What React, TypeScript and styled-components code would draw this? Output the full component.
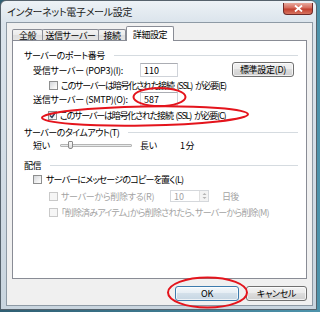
import styled, { createGlobalStyle } from 'styled-components';

const GlobalStyle = createGlobalStyle`
  html, body {
    margin: 0;
    padding: 0;
  }
  body {
    width: 320px;
    height: 312px;
    overflow: hidden;
    background: linear-gradient(90deg, #2f5f73 0%, #4d93ab 100%);
    font-family: "Noto Sans CJK JP", "Noto Sans", sans-serif;
    font-size: 9px;
    font-feature-settings: "palt" 1;
    letter-spacing: -0.7px;
    color: #000;
  }
`;

const CheckMark = () => (
  <svg width="7" height="7" viewBox="0 0 7 7">
    <path d="M1 3.5 L3 5.5 L6 1" fill="none" stroke="#2b3b58" strokeWidth="1.4" />
  </svg>
);

const Annotations = () => (
  <Overlay width="320" height="312" viewBox="0 0 320 312">
    <ellipse cx="159.5" cy="97" rx="26" ry="9" fill="none" stroke="#e4141c" strokeWidth="2" />
    <ellipse cx="145" cy="116" rx="103" ry="9.5" fill="none" stroke="#e4141c" strokeWidth="2" transform="rotate(-1 145 116)" />
    <ellipse cx="207.5" cy="292.5" rx="39.5" ry="15" fill="none" stroke="#e4141c" strokeWidth="2" />
  </Overlay>
);

const App = () => {
  return (
    <>
      <GlobalStyle />
      <Window>
        <TitleBar>
          <Title>インターネット電子メール設定</Title>
          <CloseButton>
            <svg width="9" height="7" viewBox="0 0 9 7">
              <path d="M1 0.5 L8 6.5 M8 0.5 L1 6.5" stroke="#fff" strokeWidth="1.8" />
            </svg>
          </CloseButton>
        </TitleBar>

        <Client>
          <TabBar>
            <Tab $w={31}>全般</Tab>
            <Tab $w={57}>送信サーバー</Tab>
            <Tab $w={28}>接続</Tab>
            <Tab $w={48} $active>詳細設定</Tab>
          </TabBar>

          <Panel>
            <GroupHeader $mt={7}>
              <span>サーバーのポート番号</span>
              <Rule />
            </GroupHeader>
            <Row $h={16} $indent={9}>
              <Label $w={107}>受信サーバー (POP3)(I):</Label>
              <TextBox $w={38}>110</TextBox>
              <PushButton $w={62}>標準設定(D)</PushButton>
            </Row>
            <Row $h={14} $indent={25}>
              <Check />
              <Caption $tight>このサーバーは暗号化された接続 (SSL) が必要(E)</Caption>
            </Row>
            <Row $h={14} $indent={9}>
              <Label $w={107}>送信サーバー (SMTP)(O):</Label>
              <TextBox $w={38}>587</TextBox>
            </Row>
            <Row $h={19} $indent={24}>
              <Check>
                <CheckMark />
              </Check>
              <Caption $tight>このサーバーは暗号化された接続 (SSL) が必要(C)</Caption>
            </Row>

            <GroupHeader>
              <span>サーバーのタイムアウト(T)</span>
              <Rule />
            </GroupHeader>
            <Row $h={12} $indent={9}>
              <Label $w={27}>短い</Label>
              <Slider>
                <Thumb />
              </Slider>
              <Label $w={40}>長い</Label>
              <span>1 分</span>
            </Row>

            <GroupHeader $mt={7}>
              <span>配信</span>
              <Rule />
            </GroupHeader>
            <Row $h={14} $indent={9}>
              <Check $gap={4} />
              <Caption>サーバーにメッセージのコピーを置く(L)</Caption>
            </Row>
            <Row $h={14} $mt={3} $indent={25} $disabled>
              <Check $disabled />
              <Label $w={109}>サーバーから削除する(R)</Label>
              <SpinBox>
                <SpinValue>10</SpinValue>
                <SpinArrows>
                  <svg width="7" height="10" viewBox="0 0 7 10">
                    <path d="M1.5 4 L3.5 2 L5.5 4 Z M1.5 6 L3.5 8 L5.5 6 Z" fill="#b4b4b4" />
                  </svg>
                </SpinArrows>
              </SpinBox>
              <Suffix>日後</Suffix>
            </Row>
            <Row $h={14} $mt={2} $indent={25} $disabled>
              <Check $disabled />
              <Caption>「削除済みアイテム」から削除されたら、サーバーから削除(M)</Caption>
            </Row>
          </Panel>

          <ButtonRow>
            <PushButton $w={64} $default>OK</PushButton>
            <PushButton $w={61}>キャンセル</PushButton>
          </ButtonRow>
        </Client>
        <Annotations />
      </Window>
    </>
  );
};

export default App;

const Window = styled.div`
  position: relative;
  width: 317px;
  height: 310px;
  box-sizing: border-box;
  border: 1px solid #56626c;
  border-radius: 6px 6px 0 0;
  background: linear-gradient(180deg, #edf2f6 0%, #dbe4ec 7%, #d3dde6 50%, #c9d5df 100%);
  display: flex;
  flex-direction: column;
`;

const TitleBar = styled.div`
  height: 21px;
  display: flex;
  align-items: flex-start;
  padding-left: 6px;
`;

const Title = styled.div`
  font-size: 10px;
  line-height: 21px;
  letter-spacing: -0.3px;
  color: #1a1a1a;
`;

const CloseButton = styled.div`
  margin: 2px 3px 0 auto;
  width: 30px;
  height: 12px;
  box-sizing: border-box;
  border: 1px solid #6e2a28;
  border-top: none;
  border-radius: 0 0 4px 4px;
  background: linear-gradient(180deg, #e8a89c 0%, #d56a5c 45%, #c2402f 55%, #d7735f 100%);
  display: flex;
  align-items: center;
  justify-content: center;
`;

const Client = styled.div`
  flex: 1;
  margin: 0 3px 3px 5px;
  box-sizing: border-box;
  border: 1px solid #8e9aa5;
  background: #f0f0f0;
  padding: 3px 5px 0;
  display: flex;
  flex-direction: column;
`;

const TabBar = styled.div`
  height: 14px;
  display: flex;
  align-items: flex-end;
  position: relative;
  z-index: 1;
`;

const Tab = styled.div<{ $w: number; $active?: boolean }>`
  width: ${(p) => p.$w}px;
  height: ${(p) => (p.$active ? 15 : 11)}px;
  margin-bottom: ${(p) => (p.$active ? -1 : 0)}px;
  box-sizing: border-box;
  border: 1px solid #898c95;
  border-bottom: none;
  margin-left: ${(p) => (p.$active ? 0 : -1)}px;
  border-radius: 2px 2px 0 0;
  background: ${(p) =>
    p.$active ? '#fff' : 'linear-gradient(180deg, #f3f3f3 0%, #ebebeb 50%, #dedede 51%, #e5e5e5 100%)'};
  display: flex;
  align-items: center;
  justify-content: center;
  line-height: 1;
  letter-spacing: -0.4px;
  white-space: nowrap;
  &:first-child {
    margin-left: 0;
  }
`;

const Panel = styled.div`
  height: 239px;
  box-sizing: border-box;
  border: 1px solid #898c95;
  background: #fff;
  padding: 0 8px 0 11px;
  display: flex;
  flex-direction: column;
`;

const GroupHeader = styled.div<{ $mt?: number }>`
  height: 14px;
  margin-top: ${(p) => p.$mt ?? 0}px;
  display: flex;
  align-items: center;
  white-space: nowrap;
  letter-spacing: -0.5px;
`;

const Rule = styled.div`
  flex: 1;
  height: 1px;
  margin-left: 9px;
  background: #d5dbe0;
`;

const Row = styled.div<{ $h: number; $mt?: number; $indent: number; $disabled?: boolean }>`
  height: ${(p) => p.$h}px;
  margin-top: ${(p) => p.$mt ?? 0}px;
  padding-left: ${(p) => p.$indent}px;
  display: flex;
  align-items: center;
  white-space: nowrap;
  color: ${(p) => (p.$disabled ? '#a3a3a3' : '#000')};
`;

const Label = styled.span<{ $w: number }>`
  width: ${(p) => p.$w}px;
  flex: none;
  letter-spacing: -0.3px;
`;

const Caption = styled.span<{ $tight?: boolean }>`
  letter-spacing: ${(p) => (p.$tight ? -1.2 : -0.8)}px;
  word-spacing: ${(p) => (p.$tight ? 2 : 0)}px;
`;

const Check = styled.span<{ $disabled?: boolean; $gap?: number }>`
  width: 9px;
  height: 9px;
  flex: none;
  box-sizing: border-box;
  margin-right: ${(p) => p.$gap ?? 3}px;
  border: 1px solid ${(p) => (p.$disabled ? '#c9c9c9' : '#8e8f8f')};
  background: ${(p) =>
    p.$disabled ? '#f6f6f6' : 'linear-gradient(135deg, #d3d6da 0%, #f4f4f4 70%, #fff 100%)'};
  display: flex;
  align-items: center;
  justify-content: center;
`;

const TextBox = styled.div<{ $w: number }>`
  width: ${(p) => p.$w}px;
  height: 14px;
  box-sizing: border-box;
  border: 1px solid #cfd3d9;
  border-top-color: #abadb3;
  background: #fff;
  padding-left: 3px;
  display: flex;
  align-items: center;
  letter-spacing: 0;
`;

const PushButton = styled.div<{ $w: number; $default?: boolean }>`
  width: ${(p) => p.$w}px;
  height: 15px;
  box-sizing: border-box;
  margin-left: auto;
  margin-right: ${(p) => (p.$default ? 7 : 4)}px;
  align-self: ${(p) => (p.$default ? 'auto' : 'flex-start')};
  border: 1px solid ${(p) => (p.$default ? '#3d7bad' : '#707070')};
  border-radius: 3px;
  background: ${(p) =>
    p.$default
      ? 'linear-gradient(180deg, #f4f8fb 0%, #e6eef4 45%, #d3e0ea 50%, #c6d6e3 100%)'
      : 'linear-gradient(180deg, #f2f2f2 0%, #ebebeb 45%, #dddddd 50%, #cfcfcf 100%)'};
  box-shadow: inset 0 0 0 1px rgba(255, 255, 255, 0.7);
  display: flex;
  align-items: center;
  justify-content: center;
  line-height: 1;
  letter-spacing: -0.3px;
`;

const Slider = styled.div`
  position: relative;
  width: 72px;
  height: 3px;
  box-sizing: border-box;
  border: 1px solid #b5b5b5;
  border-radius: 1px;
  background: #e7eaea;
  margin-right: 8px;
`;

const Thumb = styled.div`
  position: absolute;
  left: 7px;
  top: -4px;
  width: 5px;
  height: 8px;
  box-sizing: border-box;
  border: 1px solid #8a8a8a;
  border-radius: 1px 1px 2px 2px;
  background: linear-gradient(180deg, #fafafa, #dcdcdc);
`;

const SpinBox = styled.div`
  width: 39px;
  height: 12px;
  box-sizing: border-box;
  border: 1px solid #d5d8dc;
  display: flex;
  align-items: center;
`;

const SpinValue = styled.span`
  flex: 1;
  padding-left: 3px;
  letter-spacing: 0;
`;

const SpinArrows = styled.span`
  width: 8px;
  height: 10px;
  border-left: 1px solid #e0e0e0;
  background: #f3f3f3;
  display: flex;
  align-items: center;
  justify-content: center;
`;

const Suffix = styled.span`
  margin-left: 13px;
`;

const ButtonRow = styled.div`
  height: 15px;
  margin-top: 7px;
  display: flex;
  justify-content: flex-end;
  & > div:last-child {
    margin-left: 0;
    margin-right: 0;
  }
`;

const Overlay = styled.svg`
  position: absolute;
  left: -1px;
  top: -1px;
  pointer-events: none;
`;
